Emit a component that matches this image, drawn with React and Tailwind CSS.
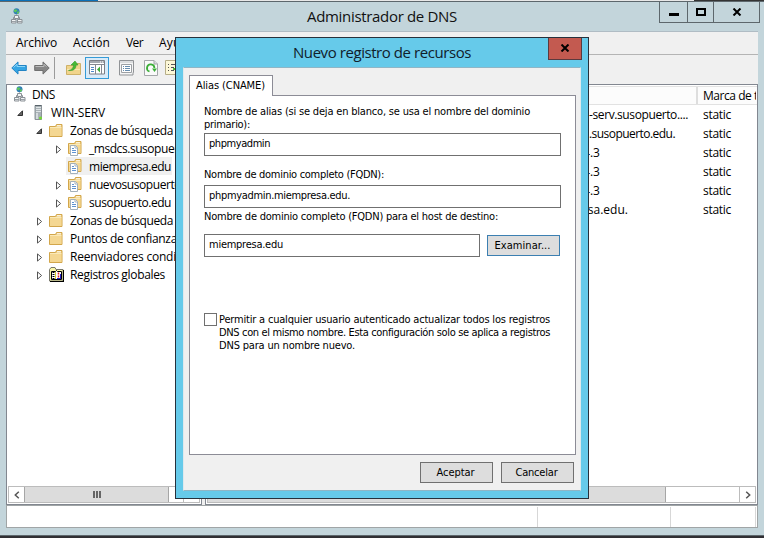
import React, { useLayoutEffect, useRef } from "react";

const UI = "font-['Open_Sans','Noto_Sans',sans-serif]";
const TAHOMA = "font-['DejaVu_Sans_Condensed','DejaVu_Sans',sans-serif]";

// One line of text whose tracking is adjusted to fill a given width.
function Fit({ w, className = "", children }) {
  const ref = useRef(null);
  useLayoutEffect(() => {
    const el = ref.current;
    el.style.letterSpacing = "0px";
    const natural = el.getBoundingClientRect().width;
    el.style.letterSpacing = (w - natural) / children.length + "px";
  }, [w, children]);
  return (
    <span ref={ref} className={`inline-block shrink-0 whitespace-pre ${className}`}>
      {children}
    </span>
  );
}

function DnsIcon() {
  return (
    <svg width="12" height="17" viewBox="0 0 12 17" className="shrink-0">
      <circle cx="5.5" cy="3.2" r="3" fill="#2f7fb8" />
      <path d="M3 1.5h2.5l1 1-2 2-1.500-1zM6 4l2-1v2l-2 1z" fill="#5fc65a" />
      <path d="M5.500 6.500v3M2.500 12v-2.500h6V12" stroke="#8b9196" fill="none" />
      <path d="M3.500 7.500h4v3h-4zM.5 11.500h4.500v3.500H.5zM6.500 11.500H11v3.500H6.500z" fill="#f2f4f5" stroke="#8b9196" />
      <path d="M1 13.500h4M7 13.500h4" stroke="#9aa0a5" />
    </svg>
  );
}

function ServerIcon() {
  return (
    <svg width="9" height="15" viewBox="0 0 9 15" className="shrink-0">
      <path d="M1 .5h6.500v14H1z" fill="#a9b2b6" stroke="#8a9297" />
      <path d="M1 .5h6.500" stroke="#59636a" />
      <path d="M2 2.500h5M2 4.500h5M2 6.500h5" stroke="#dfe4e6" />
      <path d="M2 8h2v6H2z" fill="#d4dadd" />
      <circle cx="6.500" cy="13" r="1.500" fill="#72db31" />
    </svg>
  );
}

function FolderShape() {
  return (
    <>
      <path d="M.5 2.500h6l1-2h5.500v12H.5z" fill="#efcd7c" stroke="#d2a64b" />
      <path d="M1 4h11.500v8H1z" fill="#f4d792" />
      <path d="M8 1.800h4" stroke="#fff" />
      <path d="M1 3.500h11.500" stroke="#fae9b8" />
    </>
  );
}

function Folder() {
  return (
    <svg width="14" height="13" viewBox="0 0 14 13" className="shrink-0">
      <FolderShape />
    </svg>
  );
}

function ZoneFolder() {
  return (
    <svg width="14" height="15" viewBox="0 0 14 15" className="shrink-0">
      <FolderShape />
      <path d="M2.500 4.500h5l2 2v8h-7z" fill="#fff" stroke="#a3b0bb" />
      <path d="M4 7.500h2M4 9.500h4M4 11.500h4" stroke="#5f93d2" />
      <path d="M7 4.500v2.500h2.500" fill="none" stroke="#a3b0bb" />
    </svg>
  );
}

function LogIcon() {
  return (
    <svg width="15" height="15" viewBox="0 0 15 15" className="shrink-0">
      <path d="M.5 2.500 2 .5h4l1 2h7v11.500H.5z" fill="#f8f6a6" stroke="#77776a" />
      <path d="M1 14.500h14M14.500 3v12" stroke="#000" />
      <path d="M2.500 4.500h4l1-1 1 1h4v8h-10z" fill="#fff" stroke="#000" />
      <path d="M4.500 5v7" stroke="#000" strokeDasharray="1 1" strokeWidth="2" />
      <path d="M6.500 5v7" stroke="#d8cf26" />
      <path d="M9.500 5.500v2M9.500 8.500v2" stroke="#df2020" strokeWidth="1.500" />
      <path d="M8 11.500h4M11.500 7v5" stroke="#2420c0" />
    </svg>
  );
}

function Twisty({ open }) {
  return open ? (
    <svg width="7" height="7" viewBox="0 0 7 7">
      <path d="M5.500.8v4.700H.8z" fill="#666" stroke="#333" />
    </svg>
  ) : (
    <svg width="6" height="9" viewBox="0 0 6 9" className="ml-px">
      <path d="M.5.9v7.200L4.600 4.500z" fill="#fff" stroke="#555" />
    </svg>
  );
}

const TREE = [
  { t: "DNS", w: 23, tw: "", pad: "pl-[7px]", icon: "dns", iw: "w-[18px]" },
  { t: "WIN-SERV", w: 54, tw: "open", pad: "pl-[9px]", icon: "server", iw: "w-[21px] pl-[4px]" },
  { t: "Zonas de búsqueda", w: 103, tw: "open", pad: "pl-[28px]", icon: "folder", iw: "w-[21px]" },
  { t: "_msdcs.susopuerto.edu", w: 123, tw: "closed", pad: "pl-[47px]", icon: "zone", iw: "w-[21px]" },
  { t: "miempresa.edu", w: 82, tw: "", pad: "pl-[61px]", icon: "zone", iw: "w-[21px]" },
  { t: "nuevosusopuerto.edu", w: 115, tw: "closed", pad: "pl-[47px]", icon: "zone", iw: "w-[21px]" },
  { t: "susopuerto.edu", w: 82, tw: "closed", pad: "pl-[47px]", icon: "zone", iw: "w-[21px]" },
  { t: "Zonas de búsqueda", w: 103, tw: "closed", pad: "pl-[28px]", icon: "folder", iw: "w-[21px]" },
  { t: "Puntos de confianza", w: 107, tw: "closed", pad: "pl-[28px]", icon: "folder", iw: "w-[21px]" },
  { t: "Reenviadores condicionales", w: 150, tw: "closed", pad: "pl-[28px]", icon: "folder", iw: "w-[21px]" },
  { t: "Registros globales", w: 95, tw: "closed", pad: "pl-[28px]", icon: "log", iw: "w-[21px]" },
];

const ICONS = { dns: DnsIcon, server: ServerIcon, folder: Folder, zone: ZoneFolder, log: LogIcon };

function TreeRow({ row }) {
  const Icon = ICONS[row.icon];
  return (
    <div className={`flex h-[18px] items-center ${row.pad}`}>
      {row.tw && (
        <span className="flex w-[14px] shrink-0 items-center pl-px pt-[3px]">
          <Twisty open={row.tw === "open"} />
        </span>
      )}
      <span className={`flex shrink-0 items-center ${row.iw}`}>
        <Icon />
      </span>
      <Fit w={row.w} className="pt-px">{row.t}</Fit>
    </div>
  );
}

const RECORDS = [
  { t: "-serv.susopuerto....", w: 99, pad: "pl-[383px]" },
  { t: ".susopuerto.edu.", w: 86, pad: "pl-[383px]" },
  { t: "4.3", w: 17, pad: "pl-[377px]" },
  { t: "4.3", w: 17, pad: "pl-[377px]" },
  { t: "4.3", w: 17, pad: "pl-[377px]" },
  { t: "esa.edu.", w: 47, pad: "pl-[375px]" },
];

function Chevron({ right }) {
  return (
    <svg width="6" height="8" viewBox="0 0 6 8" className={right ? "rotate-180" : ""}>
      <path d="M4.800.8 1.300 4l3.500 3.200" fill="none" stroke="#555" strokeWidth="1.500" />
    </svg>
  );
}

function Toolbar() {
  return (
    <div className="flex h-[29px] items-center pb-[4px] pl-[5px]">
      <svg width="16" height="14" viewBox="0 0 16 14">
        <path d="M.8 7 7 .9v3.600h8.300v5H7v3.600z" fill="#35a5e4" stroke="#2384c4" />
        <path d="M2.500 6.500 6 3.200v2.300h8" fill="none" stroke="#8bd5f8" />
      </svg>
      <svg width="16" height="14" viewBox="0 0 16 14" className="ml-[7px]">
        <path d="M15.200 7 9 .9v3.600H.7v5H9v3.600z" fill="#868686" stroke="#707070" />
        <path d="M1.500 5.500H10V3.200l2.500 2.500" fill="none" stroke="#bbb" />
      </svg>
      <div className="ml-[4px] h-[22px] w-px bg-[#9b9b9b]" />
      <svg width="15" height="16" viewBox="0 0 15 16" className="ml-[11px]">
        <path d="M.5 5.500h7l1.500-2h5.500v11H.5z" fill="#f1d48b" stroke="#ceb168" />
        <path d="M1 9.500h13" stroke="#f9e7b3" />
        <path d="M2.500 10.500C6 10 7.500 7.500 7.500 5H5l4-4 3 4h-2c0 4-2.500 6-7.500 5.500z" fill="#47b936" stroke="#369b2a" strokeWidth=".6" />
      </svg>
      <div className="ml-[4px] flex h-[22px] w-[24px] items-center justify-center border border-[#359bd7] bg-[#d8ebf9]">
        <svg width="16" height="15" viewBox="0 0 16 15">
          <path d="M.5.5h15v13.500H.5z" fill="#fff" stroke="#7c7f86" />
          <path d="M1 2h14" stroke="#a5a9b0" strokeWidth="2" />
          <path d="M11 2h1M13 2h1" stroke="#fff" />
          <path d="M1 4.500h14M6.500 5v9M12.500 5v9" stroke="#858990" />
          <path d="M2 7.500h3M2 9.500h3M2 11.500h3" stroke="#4f88c8" />
          <path d="M11 6.500v6L8 9.500z" fill="#3fae38" />
        </svg>
      </div>
      <svg width="15" height="16" viewBox="0 0 15 16" className="ml-[10px]">
        <path d="M.5.5h14v12H14v2.500H.5z" fill="#f5f5f5" stroke="#909396" />
        <path d="M1 2h13" stroke="#c2c5c8" />
        <path d="M2.500 4.500h10v8h-10z" fill="#fff" stroke="#9ca0a4" />
        <path d="M4 6.500h1M6 6.500h5M4 8.500h1M6 8.500h5M4 10.500h1M6 10.500h5" stroke="#678dae" />
      </svg>
      <svg width="14" height="16" viewBox="0 0 14 16" className="ml-[10px]">
        <path d="M.5.500h9.500L13.500 4v11.500H.5z" fill="#fafafa" stroke="#a4a7aa" />
        <path d="M10 .5V4h3.500" fill="#ddd" stroke="#a4a7aa" />
        <path d="M5.500 11.500A3.700 3.700 0 1 1 10.400 8" fill="none" stroke="#3cae38" strokeWidth="1.800" />
        <path d="M8 8.500h5l-2.500 3.500z" fill="#3cae38" />
      </svg>
      <svg width="15" height="16" viewBox="0 0 15 16" className="ml-[7px]">
        <path d="M.5.500h14v14H.5z" fill="#fdf8d7" stroke="#b6ae88" />
        <path d="M3 4.500h1M6 4.500h6M3 7.500h1M6 7.500h3M3 10.500h1M6 10.500h3" stroke="#555" />
        <path d="M8 8h4V5l3 4-3 4v-3H8z" fill="#47b936" />
      </svg>
    </div>
  );
}

function Field({ w, children, className }) {
  return (
    <div className={`flex h-[23px] shrink-0 items-center border border-[#707070] bg-white pb-[3px] pl-1 ${className}`}>
      <Fit w={w}>{children}</Fit>
    </div>
  );
}

function Button({ w, focus, children }) {
  return (
    <button className={`flex h-[21px] w-[73px] items-center justify-center border bg-[#dddddd] pr-[2px] ${focus ? "border-[#3c7fb1]" : "border-[#707070]"}`}>
      <Fit w={w}>{children}</Fit>
    </button>
  );
}

function Dialog() {
  return (
    <div className="absolute left-[175px] top-[37px] flex h-[462px] w-[414px] flex-col border border-[#27313c] bg-[#66caea] px-[7px] pb-[7px]">
      <div className="flex h-[29px] shrink-0 items-start">
        <div className={`flex h-[28px] flex-1 items-center pl-[110px] text-[15px] text-[#10202a] ${UI}`}>
          <Fit w={178}>Nuevo registro de recursos</Fit>
        </div>
        <div className="-mr-[1px] flex h-[22px] w-[34px] items-center justify-center border border-t-0 border-[#5b3a3e] bg-[#c35a50]">
          <svg width="10" height="8" viewBox="0 0 10 8" className="-mt-px">
            <path d="M1.500.5 8.500 7.500M8.500.5 1.500 7.500" stroke="#000" strokeWidth="2" />
          </svg>
        </div>
      </div>
      <div className={`flex flex-1 flex-col border border-[#8fb6c6] border-x-[#dfe9ed] bg-[#f0f0f0] px-[5px] pt-[7px] text-[11px] leading-[13px] text-black ${TAHOMA}`}>
        <div className="z-10 flex h-[21px] w-[84px] shrink-0 items-center border border-b-0 border-[#8c8c96] bg-white pb-px pl-[6px]">
          <Fit w={69}>Alias (CNAME)</Fit>
        </div>
        <div className="-mt-px flex h-[360px] w-[387px] shrink-0 flex-col items-start border border-[#8c8c96] bg-white px-[14px] pt-[9px]">
          <Fit w={326}>Nombre de alias (si se deja en blanco, se usa el nombre del dominio</Fit>
          <Fit w={46}>primario):</Fit>
          <Field w={61} className="mt-[2px] w-[357px]">phpmyadmin</Field>
          <Fit w={180} className="mt-[12px]">Nombre de dominio completo (FQDN):</Fit>
          <Field w={141} className="mt-[4px] w-[357px]">phpmyadmin.miempresa.edu.</Field>
          <Fit w={294} className="mt-[2px]">Nombre de dominio completo (FQDN) para el host de destino:</Fit>
          <div className="mt-[11px] flex shrink-0 items-start">
            <Field w={74} className="w-[276px]">miempresa.edu</Field>
            <div className="ml-[7px] mt-px">
              <Button w={56} focus>Examinar...</Button>
            </div>
          </div>
          <div className="mt-[56px] flex">
            <div className="h-[13px] w-[13px] border border-[#707070] bg-white" />
            <div className="ml-[2px] flex flex-col items-start">
              <Fit w={331}>Permitir a cualquier usuario autenticado actualizar todos los registros</Fit>
              <Fit w={331}>DNS con el mismo nombre. Esta configuración solo se aplica a registros</Fit>
              <Fit w={136}>DNS para un nombre nuevo.</Fit>
            </div>
          </div>
        </div>
        <div className="mt-[7px] flex justify-end gap-[8px] pr-px">
          <Button w={38}>Aceptar</Button>
          <Button w={42}>Cancelar</Button>
        </div>
      </div>
    </div>
  );
}

export default function App() {
  return (
    <div className={`relative flex h-[538px] w-[764px] flex-col overflow-hidden bg-[#c3d5db] text-[12px] leading-[18px] text-black ${UI}`}>
      <div className="flex h-px shrink-0">
        <div className="w-[98px] bg-[#0a70b8]" />
        <div className="flex-1 bg-[#e8e8e8]" />
        <div className="w-[70px] bg-[#333]" />
      </div>
      <div className="flex h-[30px] shrink-0 items-start border-t border-[#5d676c]">
        <div className="w-[200px] pl-[11px] pt-[6px]">
          <DnsIcon />
        </div>
        <div className="flex h-[27px] flex-1 items-center pl-[107px] text-[15px] text-[#111]">
          <Fit w={150}>Administrador de DNS</Fit>
        </div>
        <div className="mr-1 flex h-[21px] border border-t-0 border-[#5d676c]">
          <div className="flex w-[28px] items-center justify-center border-r border-[#5d676c]">
            <div className="mt-1 h-[3px] w-[10px] bg-black" />
          </div>
          <div className="flex w-[26px] items-center justify-center border-r border-[#5d676c]">
            <div className="h-[8px] w-[10px] border-2 border-black" />
          </div>
          <div className="flex w-[45px] items-center justify-center">
            <svg width="10" height="8" viewBox="0 0 10 8">
              <path d="M1.500.5 8.500 7.500M8.500.5 1.500 7.500" stroke="#000" strokeWidth="2" />
            </svg>
          </div>
        </div>
      </div>
      <div className="ml-[6px] flex h-[497px] w-[752px] shrink-0 flex-col border-t border-[#b0bcc4] bg-[#f0f0f0]">
        <div className="flex h-[23px] shrink-0 items-center border-b border-[#b4b4b4] pl-[10px]">
          <Fit w={41}>Archivo</Fit>
          <Fit w={37} className="ml-4">Acción</Fit>
          <Fit w={17} className="ml-4">Ver</Fit>
          <Fit w={36} className="ml-4">Ayuda</Fit>
        </div>
        <Toolbar />
        <div className="flex h-[421px] shrink-0 gap-[3px]">
          <div className="flex w-[196px] flex-col overflow-hidden border border-[#828790] bg-white">
            <div className="h-[401px] overflow-hidden">
              {TREE.map((row, i) => (
                <div key={i} className={i === 4 ? "bg-[linear-gradient(90deg,white_59px,#f0f0f0_59px,#f0f0f0_165px,white_165px)]" : ""}>
                  <TreeRow row={row} />
                </div>
              ))}
            </div>
            <div className="mx-px flex h-[17px] border border-[#bcbcbc] bg-white">
              <div className="flex w-[15px] items-center justify-center"><Chevron /></div>
              <div className="flex w-[145px] items-center justify-center gap-px border-x border-[#a6a6a6] bg-[#dcdcdc]">
                <div className="h-[7px] w-[2px] bg-[#666]" />
                <div className="h-[7px] w-[2px] bg-[#666]" />
                <div className="h-[7px] w-[2px] bg-[#666]" />
              </div>
              <div className="w-[15px] border-r border-[#bcbcbc]" />
            </div>
          </div>
          <div className="flex w-[553px] flex-col overflow-hidden border border-[#828790] bg-white">
            <div className="mt-px flex h-[19px] items-center border-y border-[#e2e2e2] bg-[#fcfcfc]">
              <div className="h-full w-[492px] shrink-0 border-r-2 border-[#dedede]" />
              <div className="w-[58px] overflow-hidden pl-[5px] pt-px">
                <Fit w={88}>Marca de tiempo</Fit>
              </div>
            </div>
            <div className="h-[381px]">
              {RECORDS.map((r, i) => (
                <div key={i} className="flex h-[19px] items-center pt-px">
                  <div className={`w-[497px] shrink-0 ${r.pad}`}>
                    <Fit w={r.w}>{r.t}</Fit>
                  </div>
                  <Fit w={28}>static</Fit>
                </div>
              ))}
            </div>
            <div className="mx-px flex h-[17px] border border-[#bcbcbc]">
              <div className="w-[458px] border-r border-[#a6a6a6] bg-[#dcdcdc]" />
              <div className="flex-1" />
              <div className="flex w-[16px] items-center justify-center border-l border-[#bcbcbc]"><Chevron right /></div>
            </div>
          </div>
        </div>
        <div className="flex h-[23px] shrink-0 border border-[#a0a5a6] bg-white pt-px">
          <div className="w-[531px] border-r border-[#d7d7d7]" />
          <div className="w-[133px] border-r border-[#d7d7d7]" />
          <div className="w-[85px] border-r border-[#d7d7d7]" />
        </div>
      </div>
      <div className="h-[7px] shrink-0" />
      <div className="h-[3px] shrink-0 border-t border-[#5d676c] bg-[#302f33]" />
      <Dialog />
    </div>
  );
}
